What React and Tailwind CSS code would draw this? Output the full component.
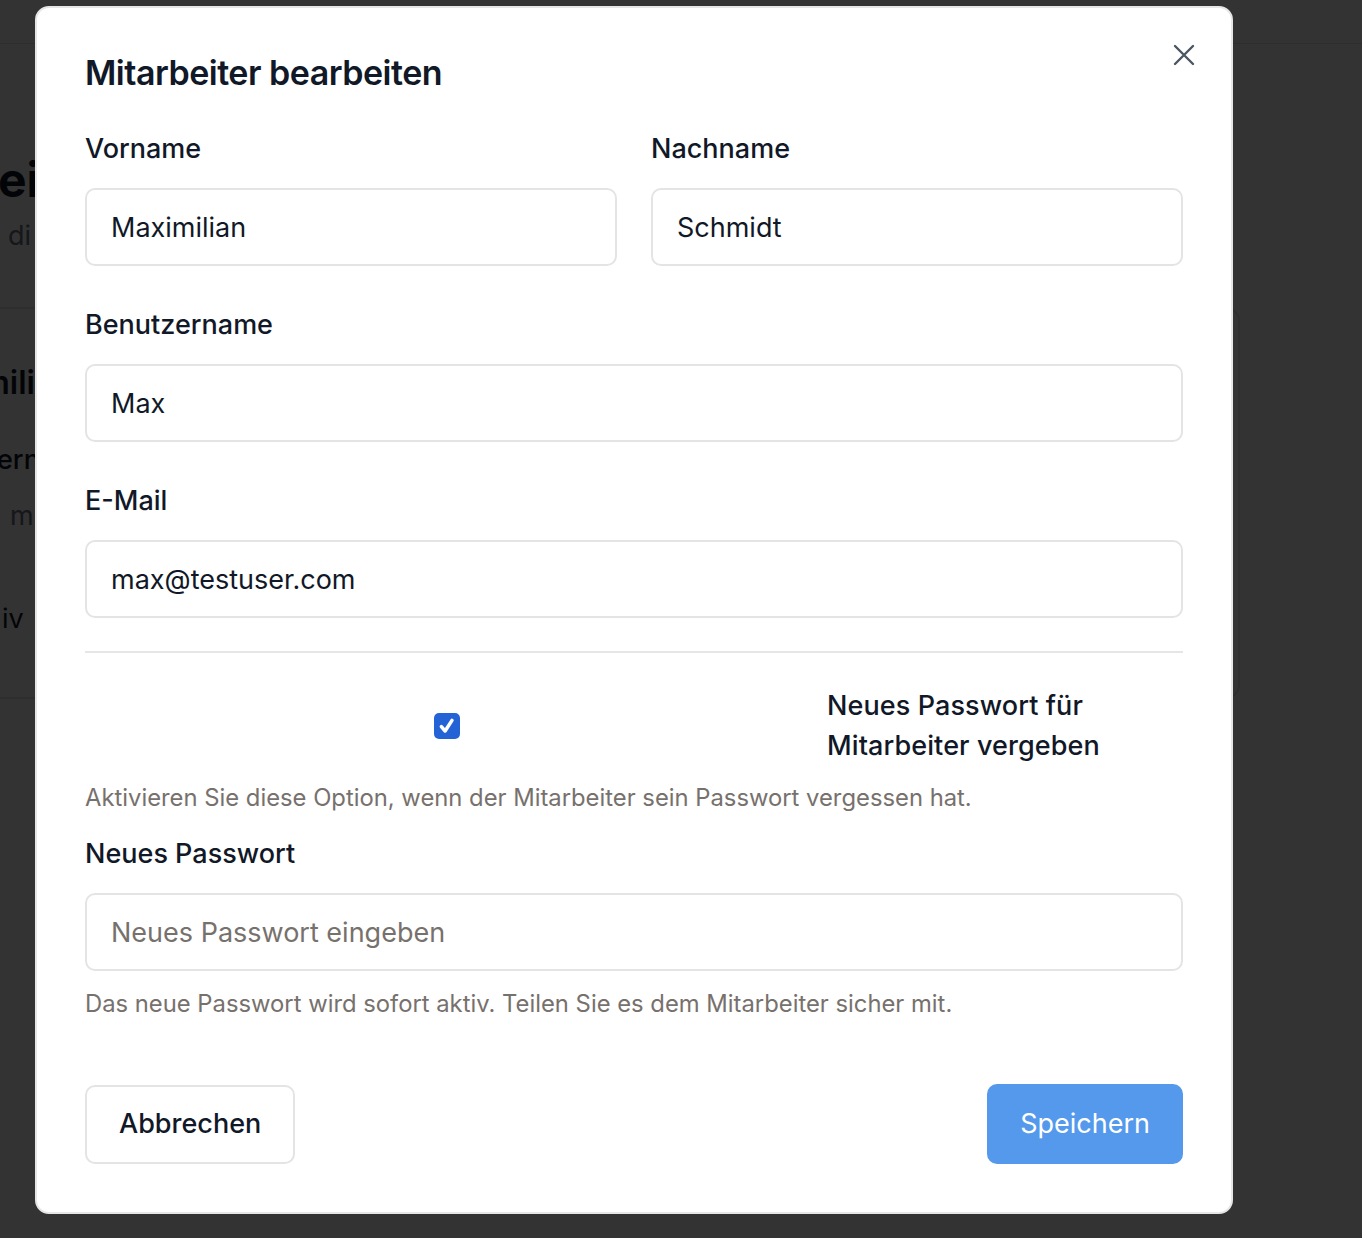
import React, { useState } from 'react';

const Field = ({ label, value, placeholder, onChange }) => (
    <div className="flex flex-col gap-[19px]">
        <label className="text-[27px] leading-[40px] font-medium text-[#111827]">{label}</label>
        <input
            type="text"
            value={value}
            placeholder={placeholder}
            onChange={onChange}
            className="h-[78px] w-full rounded-[10px] border-2 border-[#e4e4e4] bg-white px-[24px] text-[27px] text-[#111827] outline-none placeholder:text-[#77716d]"
        />
    </div>
);

const App = () => {
    const [form, setForm] = useState({
        first: 'Maximilian',
        last: 'Schmidt',
        user: 'Max',
        email: 'max@testuser.com',
        password: '',
    });
    const [reset, setReset] = useState(true);

    const set = (key) => (e) => setForm({ ...form, [key]: e.target.value });

    return (
        <div className="relative h-[1238px] w-full overflow-hidden bg-white font-['Inter',sans-serif]">
            {/* page behind the dialog */}
            <div className="h-[44px] border-b border-[#e5e7eb] bg-white" />
            <div className="flex flex-col">
                <div className="pt-[106px] text-[48px] leading-[60px] font-bold text-[#111827] -ml-[2px]">ei</div>
                <div className="pt-[6px] pl-[8px] text-[27px] leading-[40px] text-[#6b7280]">di</div>
                <div className="mt-[51px] mr-[122px] -ml-[20px] h-[392px] rounded-[14px] border-2 border-[#e5e7eb] bg-white pt-[52px] pl-[8px]">
                    <div className="-ml-[9px] text-[32px] leading-[44px] font-semibold text-[#111827]">mili</div>
                    <div className="mt-[35px] ml-[7px] text-[27px] leading-[40px] font-medium text-[#111827]">ern</div>
                    <div className="mt-[16px] pl-[20px] text-[27px] leading-[40px] text-[#6b7280]">m</div>
                    <div className="mt-[63px] pl-[12px] text-[27px] leading-[40px] text-[#111827]">iv</div>
                </div>
            </div>

            {/* overlay */}
            <div className="absolute inset-0 bg-black/80" />

            {/* dialog */}
            <div className="absolute left-[35px] top-[6px] w-[1198px] rounded-[14px] border-2 border-[#e6e6e6] bg-white px-[48px] pt-[43px] pb-[48px]">
                <button className="absolute right-[30px] top-[30px] flex h-[34px] w-[34px] items-center justify-center text-[#4b5563]">
                    <svg width="24" height="24" viewBox="0 0 24 24" fill="none" stroke="currentColor" strokeWidth="2.4" strokeLinecap="round">
                        <path d="M3 3l18 18M21 3L3 21" />
                    </svg>
                </button>

                <h2 className="text-[34px] leading-[44px] font-semibold tracking-[-0.5px] text-[#111827]">Mitarbeiter bearbeiten</h2>

                <div className="mt-[34px] grid grid-cols-2 gap-x-[34px]">
                    <Field label="Vorname" value={form.first} onChange={set('first')} />
                    <Field label="Nachname" value={form.last} onChange={set('last')} />
                </div>

                <div className="mt-[39px]">
                    <Field label="Benutzername" value={form.user} onChange={set('user')} />
                </div>

                <div className="mt-[39px]">
                    <Field label="E-Mail" value={form.email} onChange={set('email')} />
                </div>

                <div className="mt-[33px] border-t-2 border-[#e6e6e6] pt-[33px]">
                    <div className="flex items-center gap-[18px]">
                        <div className="flex flex-1 justify-center">
                            <button
                                onClick={() => setReset(!reset)}
                                className={`flex h-[26px] w-[26px] items-center justify-center rounded-[5px] ${reset ? 'bg-[#2463d6]' : 'border-2 border-[#9ca3af] bg-white'}`}
                            >
                                {reset && (
                                    <svg width="20" height="20" viewBox="0 0 16 16" fill="none" stroke="white" strokeWidth="2.8" strokeLinecap="round" strokeLinejoin="round">
                                        <path d="M3.5 8.5l3 3.5 5.5-8.5" />
                                    </svg>
                                )}
                            </button>
                        </div>
                        <span className="w-[356px] text-[27px] leading-[40px] font-medium tracking-[0.1px] text-[#111827]">
                            Neues Passwort für Mitarbeiter vergeben
                        </span>
                    </div>
                    <p className="mt-[14px] text-[23.8px] leading-[36px] text-[#77716d]">
                        Aktivieren Sie diese Option, wenn der Mitarbeiter sein Passwort vergessen hat.
                    </p>
                </div>

                <div className="mt-[18px]">
                    <Field label="Neues Passwort" value={form.password} placeholder="Neues Passwort eingeben" onChange={set('password')} />
                    <p className="mt-[15px] text-[23.8px] leading-[36px] text-[#77716d]">
                        Das neue Passwort wird sofort aktiv. Teilen Sie es dem Mitarbeiter sicher mit.
                    </p>
                </div>

                <div className="mt-[62px] flex items-center justify-between">
                    <button className="h-[79px] rounded-[10px] border-2 border-[#e4e4e4] bg-white px-[32px] text-[27px] font-medium text-[#111827]">
                        Abbrechen
                    </button>
                    <button className="h-[80px] rounded-[10px] bg-[#5599ec] px-[33px] text-[27px] text-white">
                        Speichern
                    </button>
                </div>
            </div>
        </div>
    );
};

export default App;
